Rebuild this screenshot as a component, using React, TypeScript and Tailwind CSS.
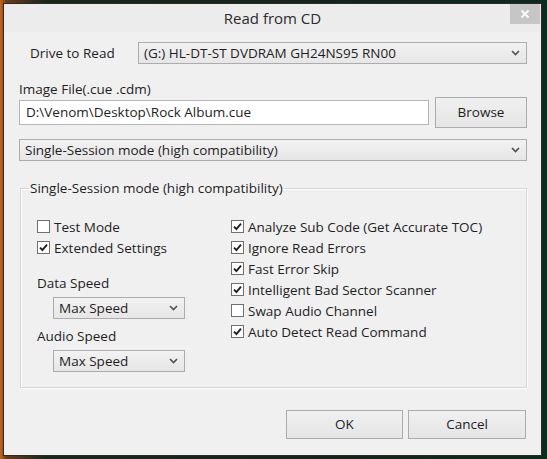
import React from 'react';

const font = { fontFamily: '"Open Sans", "Noto Sans", "Liberation Sans", sans-serif' };

function Chevron() {
  return (
    <svg width="9" height="6" viewBox="0 0 9 6" className="shrink-0">
      <path d="M1 1 L4.5 4.5 L8 1" fill="none" stroke="#505050" strokeWidth="1.6" />
    </svg>
  );
}

function Combo({ value, className }: { value: string; className: string }) {
  return (
    <div
      className={`flex items-center justify-between border border-[#acacac] bg-[linear-gradient(#f2f2f2,#e6e6e6)] pl-[5px] pr-[6px] text-[13.5px] text-[#1e1e1e] ${className}`}
    >
      <span className="whitespace-nowrap leading-[18px]">{value}</span>
      <Chevron />
    </div>
  );
}

function Check({ label, checked }: { label: string; checked?: boolean }) {
  return (
    <div className="flex h-[21px] items-center gap-[4px]">
      <div className="flex h-[13px] w-[13px] shrink-0 items-center justify-center border border-[#707070] bg-white">
        {checked && (
          <svg width="9" height="9" viewBox="0 0 9 9">
            <path d="M1 4.6 L3.4 7 L8 1.6" fill="none" stroke="#202020" strokeWidth="1.9" />
          </svg>
        )}
      </div>
      <span className="whitespace-nowrap text-[13.5px] leading-[18px] text-[#1e1e1e]">{label}</span>
    </div>
  );
}

function Button({ label, className }: { label: string; className: string }) {
  return (
    <button
      className={`flex items-center justify-center border border-[#acacac] bg-[linear-gradient(#f0f0f0,#e5e5e5)] text-[13.5px] text-[#1e1e1e] ${className}`}
    >
      {label}
    </button>
  );
}

export default function App() {
  return (
    <div
      style={font}
      className="h-[459px] w-[547px] bg-[linear-gradient(90deg,#c4661f_0%,#6a3a16_1.2%,#1c271c_8%,#15231b_60%,#0d2a1f_100%)] pl-[4px] pt-[4px]"
    >
      <div className="flex h-[451px] w-[537px] flex-col bg-[#f0f0f0] shadow-[0_0_0_1px_#2a2a2a]">
        {/* Title bar */}
        <div className="relative flex h-[28px] items-center justify-center bg-[#ececec]">
          <span className="text-[15px] text-[#2b2b2b]">Read from CD</span>
          <div className="absolute right-[1px] top-0 flex h-[20px] w-[30px] items-center justify-center bg-[#c6c6c6]">
            <svg width="10" height="10" viewBox="0 0 10 10">
              <path d="M1.5 1.5 L8.5 8.5 M8.5 1.5 L1.5 8.5" stroke="#fff" strokeWidth="1.8" />
            </svg>
          </div>
        </div>

        <div className="flex flex-col pl-[15px] pr-[14px]">
          {/* Drive */}
          <div className="mt-[10px] flex h-[22px] items-center">
            <span className="w-[119px] shrink-0 pl-[11px] text-[13.5px] text-[#1e1e1e]">Drive to Read</span>
            <Combo value="(G:) HL-DT-ST DVDRAM GH24NS95 RN00" className="h-[22px] flex-1" />
          </div>

          {/* Image file */}
          <div className="mt-[17px] h-[16px] text-[13.5px] leading-[16px] text-[#1e1e1e]">Image File(.cue .cdm)</div>
          <div className="flex h-[31px] items-center gap-[6px]">
            <div className="flex h-[25px] w-[410px] items-center border border-[#b5b5b5] bg-white pl-[6px] text-[13.5px] text-[#1e1e1e]">
              D:\Venom\Desktop\Rock Album.cue
            </div>
            <Button label="Browse" className="h-[31px] w-[92px]" />
          </div>

          {/* Session mode */}
          <Combo value="Single-Session mode (high compatibility)" className="mt-[11px] h-[22px]" />

          {/* Group */}
          <fieldset className="ml-[1px] mt-[19px] h-[208px] border border-[#d5d5d5] px-[16px] shadow-[inset_1px_1px_0_#fff,1px_1px_0_#fff]">
            <legend className="ml-[-8px] px-[1px] text-[13.5px] leading-[16px] text-[#1e1e1e]">
              Single-Session mode (high compatibility)
            </legend>
            <div className="mt-[20px] flex">
              <div className="flex w-[194px] flex-col">
                <Check label="Test Mode" />
                <Check label="Extended Settings" checked />
                <span className="mt-[17px] h-[16px] text-[13.5px] leading-[16px] text-[#1e1e1e]">Data Speed</span>
                <Combo value="Max Speed" className="ml-[16px] mt-[6px] h-[22px] w-[132px]" />
                <span className="mt-[9px] h-[16px] text-[13.5px] leading-[16px] text-[#1e1e1e]">Audio Speed</span>
                <Combo value="Max Speed" className="ml-[16px] mt-[6px] h-[22px] w-[132px]" />
              </div>
              <div className="flex flex-col">
                <Check label="Analyze Sub Code (Get Accurate TOC)" checked />
                <Check label="Ignore Read Errors" checked />
                <Check label="Fast Error Skip" checked />
                <Check label="Intelligent Bad Sector Scanner" checked />
                <Check label="Swap Audio Channel" />
                <Check label="Auto Detect Read Command" checked />
              </div>
            </div>
          </fieldset>

          {/* Buttons */}
          <div className="mt-[22px] flex justify-end gap-[5px] pr-[1px]">
            <Button label="OK" className="h-[29px] w-[117px]" />
            <Button label="Cancel" className="h-[29px] w-[118px]" />
          </div>
        </div>
      </div>
    </div>
  );
}
